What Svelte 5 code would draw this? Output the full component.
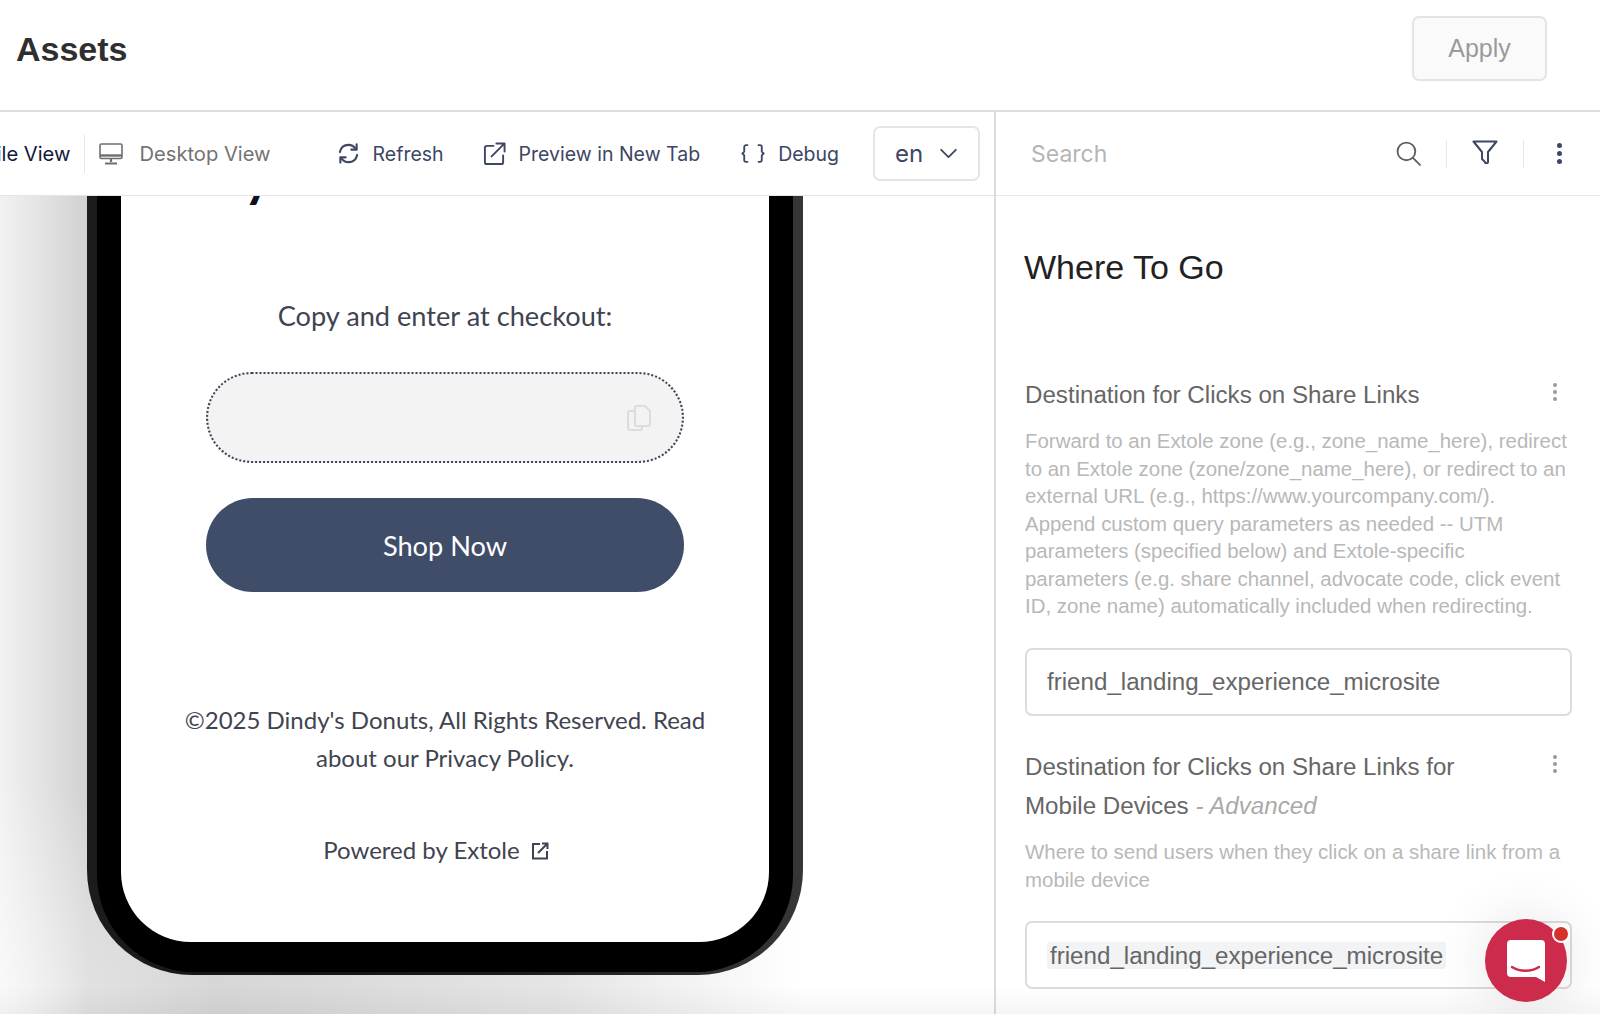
<script>
  const tools = [
    { label: 'Refresh', icon: 'refresh' },
    { label: 'Preview in New Tab', icon: 'external' },
    { label: 'Debug', icon: 'braces' }
  ];
  const mobileHelp = 'Where to send users when they click on a share link from a mobile device';
</script>

<div class="page">
  <header class="top">
    <h1>Assets</h1>
    <button class="apply" type="button">Apply</button>
  </header>

  <main class="body">
    <section class="left">
      <div class="toolbar">
        <span class="view active">Mobile View</span>
        <span class="view-sep"></span>
        <svg class="desktop-icon" viewBox="0 0 24 22" width="24" height="22" fill="none" stroke="#6f6f6f" stroke-width="1.6">
          <rect x="1" y="1" width="22" height="14.500" rx="1.500" />
          <path d="M1 12.500h22" stroke-width="2.400" />
          <path d="M12 15v4M6 20.500h12" stroke-width="2.200" />
        </svg>
        <span class="view">Desktop View</span>

        {#each tools as tool}
          <span class="tool tool-{tool.icon}">
            {#if tool.icon === 'refresh'}
              <svg viewBox="0 0 24 24" width="23" height="23" fill="none" stroke="#3d4663" stroke-width="2.200" stroke-linecap="round" stroke-linejoin="round">
                <path d="M3 10.500C4 6 7.500 3 12 3c3 0 5.500 1.300 7.500 4" />
                <path d="M20.500 2.500V8h-5.500" />
                <path d="M21 13.500C20 18 16.500 21 12 21c-3 0-5.500-1.300-7.500-4" />
                <path d="M3.500 21.500V16H9" />
              </svg>
            {:else if tool.icon === 'external'}
              <svg viewBox="0 0 24 24" width="23" height="23" fill="none" stroke="#3d4663" stroke-width="2" stroke-linecap="round" stroke-linejoin="round">
                <path d="M11 4H4a2 2 0 0 0-2 2v15a2 2 0 0 0 2 2h15a2 2 0 0 0 2-2v-7" />
                <path d="M9 15 22 2M14 1.500h8.500V10" />
              </svg>
            {:else}
              <svg viewBox="0 0 26 22" width="24" height="21" fill="none" stroke="#3d4663" stroke-width="2" stroke-linecap="round" stroke-linejoin="round">
                <path d="M7 2H5.500A2 2 0 0 0 3.500 4v5l-2 2 2 2v5a2 2 0 0 0 2 2H7" />
                <path d="M19 2h1.500a2 2 0 0 1 2 2v5l2 2-2 2v5a2 2 0 0 1-2 2H19" />
              </svg>
            {/if}
            {tool.label}
          </span>
        {/each}

        <div class="lang">
          <span>en</span>
          <svg viewBox="0 0 20 12" width="19" height="11" fill="none" stroke="#3d4663" stroke-width="2" stroke-linecap="round" stroke-linejoin="round">
            <path d="M2 2l8 8 8-8" />
          </svg>
        </div>
      </div>

      <div class="preview">
        <div class="phone">
          <div class="phone-body">
            <div class="screen">
              <p class="heading-tail">y</p>
              <p class="copy-hint">Copy and enter at checkout:</p>
              <div class="code-box">
                <svg viewBox="0 0 24 26" width="24" height="26" fill="none" stroke="#dcdcdc" stroke-width="2" stroke-linejoin="round">
                  <path d="M8 3a2 2 0 0 1 2-2h8l5 5v13a2 2 0 0 1-2 2H10a2 2 0 0 1-2-2z" />
                  <path d="M8 6H3a2 2 0 0 0-2 2v15a2 2 0 0 0 2 2h10a2 2 0 0 0 2-2v-2" />
                </svg>
              </div>
              <button class="shop" type="button">Shop Now</button>
              <p class="legal">©2025 Dindy's Donuts, All Rights Reserved. Read about our Privacy Policy.</p>
              <p class="powered">
                Powered by Extole
                <svg viewBox="0 0 18 18" width="18" height="18" fill="none" stroke="#3f4450" stroke-width="2">
                  <path d="M9 2H2v14.500h14V9" />
                  <path d="M7 11 16.500 1.500M11 1.500h5.500V7" />
                </svg>
              </p>
            </div>
          </div>
        </div>
      </div>
    </section>

    <aside class="right">
      <div class="search-bar">
        <span class="search-text">Search</span>
        <svg class="s-icon" viewBox="0 0 24 24" width="25" height="25" fill="none" stroke="#5e6068" stroke-width="1.8" stroke-linecap="round">
          <circle cx="10" cy="10" r="8.500" />
          <path d="M16.500 16.500 23 23" />
        </svg>
        <span class="s-sep"></span>
        <svg class="f-icon" viewBox="0 0 26 24" width="26" height="24" fill="none" stroke="#3d4663" stroke-width="2" stroke-linejoin="round">
          <path d="M1.500 1.500h23L16 12v9.500a1.500 1.500 0 0 1-3 .500L10 19v-7z" />
        </svg>
        <span class="s-sep last"></span>
        <span class="dots dark"><i></i><i></i><i></i></span>
      </div>

      <div class="form">
        <h2>Where To Go</h2>

        <div class="field first">
          <div class="label-row">
            <span class="label">Destination for Clicks on Share Links</span>
            <span class="dots"><i></i><i></i><i></i></span>
          </div>
          <p class="help">Forward to an Extole zone (e.g., zone_name_here), redirect to an Extole zone (zone/zone_name_here), or redirect to an external URL (e.g., https://www.yourcompany.com/). Append custom query parameters as needed -- UTM parameters (specified below) and Extole-specific parameters (e.g. share channel, advocate code, click event ID, zone name) automatically included when redirecting.</p>
          <div class="input">friend_landing_experience_microsite</div>
        </div>

        <div class="field">
          <div class="label-row">
            <span class="label">Destination for Clicks on Share Links for Mobile Devices <em>- Advanced</em></span>
            <span class="dots"><i></i><i></i><i></i></span>
          </div>
          <p class="help">{mobileHelp}</p>
          <div class="input"><span class="token">friend_landing_experience_microsite</span></div>
        </div>
      </div>
    </aside>
  </main>

  <div class="chat">
    <svg viewBox="0 0 38 42" width="38" height="42">
      <path d="M4 0h30a4 4 0 0 1 4 4v38l-9-5H4a4 4 0 0 1-4-4V4a4 4 0 0 1 4-4z" fill="#fff" />
      <path d="M5 27c8 5 19 5 27 0" fill="none" stroke="#cc2b4b" stroke-width="2.400" stroke-linecap="round" />
    </svg>
    <span class="badge"></span>
  </div>
</div>

<style>
  :global(body) {
    margin: 0;
    background: #fff;
  }

  .page {
    position: relative;
    width: 1600px;
    height: 1014px;
    overflow: hidden;
    font-family: "Liberation Sans", Arial, sans-serif;
    background: #fff;
  }

  .page::after {
    content: '';
    position: absolute;
    left: 0;
    right: 0;
    bottom: 0;
    height: 28px;
    background: linear-gradient(rgba(0, 0, 0, 0), rgba(0, 0, 0, 0.04));
    pointer-events: none;
  }

  .top {
    height: 110px;
    border-bottom: 2px solid #dddddd;
    display: flex;
    align-items: flex-start;
    justify-content: space-between;
    padding: 0 53px 0 16px;
  }

  h1 {
    margin: 28px 0 0;
    font-size: 34px;
    line-height: 42px;
    font-weight: 700;
    color: #2f2f2f;
  }

  .apply {
    margin-top: 16px;
    width: 135px;
    height: 65px;
    border: 2px solid #e4e4e4;
    border-radius: 7px;
    background: #fafafa;
    color: #9a9a9a;
    font-family: inherit;
    font-size: 25px;
  }

  .body {
    display: flex;
    height: 902px;
  }

  .left {
    width: 994px;
    flex-shrink: 0;
    border-right: 2px solid #dcdcdc;
    display: flex;
    flex-direction: column;
    min-width: 0;
  }

  .toolbar {
    height: 83px;
    flex-shrink: 0;
    border-bottom: 1px solid #e4e5ea;
    display: flex;
    align-items: center;
    justify-content: flex-end;
    padding-right: 14px;
    overflow: hidden;
    white-space: nowrap;
    font-family: Inter, "Liberation Sans", sans-serif;
    font-size: 19.500px;
    color: #3d4663;
  }

  .view {
    color: #737373;
    font-size: 20.150px;
    flex-shrink: 0;
  }

  .view.active {
    color: #101a3c;
  }

  .view-sep {
    width: 1px;
    height: 38px;
    background: #e6e6e6;
    margin: 0 14px;
    flex-shrink: 0;
  }

  .desktop-icon {
    margin-right: 16px;
    flex-shrink: 0;
  }

  .tool {
    display: flex;
    align-items: center;
    gap: 13px;
    flex-shrink: 0;
  }

  .tool-refresh {
    margin-left: 66px;
  }

  .tool-external {
    margin-left: 39px;
  }

  .tool-braces {
    margin-left: 41px;
  }

  .lang {
    margin-left: 34px;
    width: 107px;
    height: 55px;
    box-sizing: border-box;
    border: 2px solid #e4e5ea;
    border-radius: 7px;
    display: flex;
    align-items: center;
    justify-content: space-between;
    padding: 0 20px;
    font-size: 24px;
    flex-shrink: 0;
  }

  /* soft shadow falls to the left and under the device */
  .preview {
    flex: 1;
    overflow: hidden;
    padding-left: 87px;
    background:
      radial-gradient(ellipse 220px 240px at 0 100%, rgba(255, 255, 255, 0.6), rgba(255, 255, 255, 0)),
      linear-gradient(
        90deg,
        rgba(0, 0, 0, 0.05) 0,
        rgba(0, 0, 0, 0.11) 40px,
        rgba(0, 0, 0, 0.18) 87px,
        rgba(0, 0, 0, 0.17) 140px,
        rgba(0, 0, 0, 0.15) 300px,
        rgba(0, 0, 0, 0.1) 560px,
        rgba(0, 0, 0, 0) 803px
      );
  }

  .phone {
    width: 716px;
    height: 779px;
    box-sizing: border-box;
    padding: 0 10px 3px;
    background: linear-gradient(90deg, #1c1c1c 0, #141414 30%, #1c1c1c 60%, #363636 100%);
    border-radius: 0 0 105px 105px;
  }

  .phone-body {
    height: 100%;
    box-sizing: border-box;
    padding: 0 24px 30px;
    background: #000;
    border-radius: 0 0 97px 97px;
  }

  .screen {
    height: 100%;
    background: #fff;
    border-radius: 0 0 70px 70px;
    overflow: hidden;
    display: flex;
    flex-direction: column;
    align-items: center;
    font-family: Lato, "Liberation Sans", sans-serif;
    color: #3f4450;
  }

  .heading-tail {
    margin: -44px 0 0 -376px;
    height: 54px;
    line-height: 54px;
    font-size: 48px;
    font-weight: 900;
    color: #0c1022;
  }

  p {
    margin: 0;
  }

  .copy-hint {
    margin-top: 93px;
    font-size: 27.200px;
    line-height: 34px;
  }

  .code-box {
    margin-top: 39px;
    width: 478px;
    height: 91px;
    box-sizing: border-box;
    border: 2px dotted #3a4358;
    border-radius: 46px;
    background: #f3f3f3;
    display: flex;
    align-items: center;
    justify-content: flex-end;
    padding-right: 31px;
  }

  .shop {
    margin-top: 35px;
    width: 478px;
    height: 94px;
    border: none;
    border-radius: 47px;
    background: #3f4d69;
    color: #fff;
    font-family: inherit;
    font-size: 27.200px;
  }

  .legal {
    margin-top: 109px;
    width: 560px;
    text-align: center;
    font-size: 24px;
    line-height: 38px;
  }

  .powered {
    margin: 54px 18px 0 0;
    font-size: 24px;
    line-height: 38px;
    display: flex;
    align-items: center;
    gap: 11px;
  }

  .powered svg {
    margin-top: 2px;
  }

  .right {
    flex: 1;
    min-width: 0;
  }

  .search-bar {
    height: 83px;
    border-bottom: 1px solid #e8e8e8;
    display: flex;
    align-items: center;
    padding: 0 38px 0 35px;
  }

  .search-text {
    flex: 1;
    font-family: Inter, "Liberation Sans", sans-serif;
    font-size: 23px;
    color: #b5b5b5;
  }

  .s-sep {
    width: 1px;
    height: 28px;
    background: #e8e8e8;
    margin: 0 25px;
  }

  .s-sep.last {
    margin-right: 33px;
  }

  .f-icon {
    margin-top: -3px;
  }

  .dots {
    display: inline-flex;
    flex-direction: column;
    gap: 3px;
    flex-shrink: 0;
  }

  .dots i {
    width: 4px;
    height: 4px;
    border-radius: 50%;
    background: #9a9a9a;
  }

  .dots.dark i {
    width: 5px;
    height: 5px;
    background: #3d4663;
  }

  .form {
    padding: 51px 28px 0 27px;
  }

  h2 {
    margin: 0 0 0 1px;
    font-size: 34px;
    line-height: 40px;
    font-weight: 400;
    color: #222;
  }

  .field {
    margin: 31.500px 0 0 2px;
  }

  .field.first {
    margin-top: 88px;
  }

  .label-row {
    display: flex;
    justify-content: space-between;
    align-items: flex-start;
  }

  .label {
    width: 470px;
    font-size: 24.150px;
    line-height: 39px;
    color: #666;
  }

  .label em {
    color: #aaa;
  }

  .label-row .dots {
    margin: 8px 15px 0 0;
  }

  .help {
    margin-top: 13px;
    width: 544px;
    font-size: 20.450px;
    line-height: 27.500px;
    color: #b8b8b8;
  }

  .input {
    margin-top: 28px;
    height: 68px;
    box-sizing: border-box;
    border: 2px solid #dcdcdc;
    border-radius: 7px;
    display: flex;
    align-items: center;
    padding-left: 20px;
    font-size: 24.150px;
    color: #666;
  }

  .token {
    background: #f1f3f5;
    border-radius: 3px;
    padding: 0 3px;
    line-height: 27px;
  }

  .chat {
    position: absolute;
    left: 1485px;
    top: 919px;
    width: 82px;
    height: 83px;
    border-radius: 50%;
    background: #cc2b4b;
    box-shadow: 0 0 60px rgba(0, 0, 0, 0.12);
    display: flex;
    align-items: center;
    justify-content: center;
    z-index: 2;
  }

  .badge {
    position: absolute;
    left: 67px;
    top: 6px;
    width: 14px;
    height: 14px;
    border-radius: 50%;
    background: #d5332a;
    border: 2px solid #fff;
  }
</style>
